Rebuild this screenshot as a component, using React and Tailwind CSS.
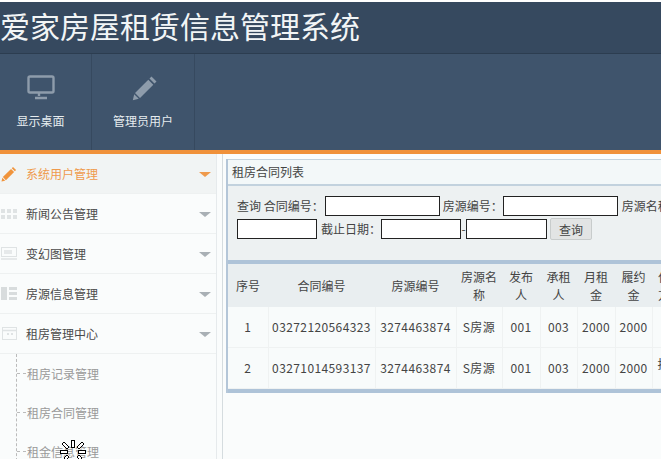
const font = { fontFamily: '"Noto Sans CJK SC", "Noto Sans", sans-serif' };

function Monitor() {
  return (
    <svg width="28" height="26" viewBox="0 0 28 26" fill="none">
      <rect x="1.5" y="1.5" width="25" height="16" rx="1.5" stroke="#8e9cab" strokeWidth="2.4" />
      <path d="M12 18v3M8 23h12" stroke="#8e9cab" strokeWidth="2.4" />
    </svg>
  );
}

function Pencil({ color = "#8e9cab", size = 26 }) {
  return (
    <svg width={size} height={size} viewBox="0 0 26 26" fill={color}>
      <path d="M19.5 1.5l5 5-2 2-5-5zM16.3 4.7l5 5L8 23l-5-5zM2.2 19.2l4.6 4.6L0.8 25.2z" />
    </svg>
  );
}

function Caret({ active }) {
  return <span className={`w-0 h-0 border-x-[6px] border-x-transparent border-t-[5px] mt-0.5 ${active ? "border-t-[#ef9a4c]" : "border-t-[#a9b0b5]"}`} />;
}

function GridIcon() {
  return (
    <svg width="16" height="10" viewBox="0 0 16 10" fill="#dfe3e4">
      <rect x="0" y="0" width="4" height="4" /><rect x="6" y="0" width="4" height="4" /><rect x="12" y="0" width="4" height="4" />
      <rect x="0" y="6" width="4" height="4" /><rect x="6" y="6" width="4" height="4" /><rect x="12" y="6" width="4" height="4" />
    </svg>
  );
}

function SlideIcon() {
  return (
    <svg width="16" height="13" viewBox="0 0 16 13" fill="none" stroke="#dfe3e4">
      <rect x="0.5" y="0.5" width="15" height="9" strokeWidth="1" />
      <rect x="3" y="3" width="8" height="4" fill="#e6e9ea" stroke="none" />
      <path d="M0 12h16" strokeWidth="1.5" />
    </svg>
  );
}

function BlocksIcon() {
  return (
    <svg width="16" height="13" viewBox="0 0 16 13" fill="#d8dcdd">
      <rect x="0" y="0" width="6" height="13" /><rect x="8" y="0" width="8" height="3" />
      <rect x="8" y="5" width="8" height="3" /><rect x="8" y="10" width="8" height="3" />
    </svg>
  );
}

function CalIcon() {
  return (
    <svg width="15" height="13" viewBox="0 0 15 13" fill="none" stroke="#dfe3e4">
      <rect x="0.5" y="0.5" width="14" height="12" />
      <path d="M0 3.5h15" strokeWidth="1.5" />
      <rect x="5" y="6" width="2" height="2" fill="#dfe3e4" stroke="none" />
      <rect x="9" y="6" width="2" height="2" fill="#dfe3e4" stroke="none" />
    </svg>
  );
}

function Busy() {
  return (
    <svg className="absolute left-[58px] top-[439px]" width="30" height="20" viewBox="0 0 30 20" fill="#fff" stroke="#000" strokeWidth="1">
      <rect x="13.5" y="1.5" width="3" height="7" />
      <path d="M4 5l2-2 5 5-2 2zM26 5l-2-2-5 5 2 2z" />
      <rect x="2.5" y="11.5" width="7" height="3" />
      <rect x="20.5" y="11.5" width="7" height="3" />
      <path d="M9 16l2 2-3 3-2-2zM21 16l-2 2 3 3 2-2z" />
    </svg>
  );
}

const menu = [
  { label: "系统用户管理", icon: <Pencil color="#f0943c" size={16} />, active: true },
  { label: "新闻公告管理", icon: <GridIcon /> },
  { label: "变幻图管理", icon: <SlideIcon /> },
  { label: "房源信息管理", icon: <BlocksIcon /> },
  { label: "租房管理中心", icon: <CalIcon /> },
];

const subMenu = ["租房记录管理", "租房合同管理", "租金信息管理"];

const headers = ["序号", "合同编号", "房源编号", "房源名称", "发布人", "承租人", "月租金", "履约金", "付款方式"];
const widths = ["w-[40px]", "w-[107px]", "w-[81px]", "w-[46px]", "w-[38px]", "w-[37px]", "w-[38px]", "w-[37px]", "w-[40px]"];
const rows = [
  ["1", "03272120564323", "3274463874", "S房源", "001", "003", "2000", "2000", ""],
  ["2", "03271014593137", "3274463874", "S房源", "001", "003", "2000", "2000", "按月"],
];

function Field({ w }) {
  return <input className={`${w} h-[20px] bg-white border border-[#222] align-middle`} />;
}

export default function App() {
  return (
    <div className="relative w-[666px] h-[459px] overflow-hidden bg-white text-[12px] text-[#333]" style={font}>
      <div className="w-[661px] h-full flex flex-col bg-[#fafcfc] overflow-hidden">
        <div className="h-[2px] bg-white shrink-0" />
        <header className="h-[52px] shrink-0 bg-[#36495f] border-b border-[#2c3d50] flex items-center pb-1.5 text-[30px] leading-none text-[#f2f5f6] whitespace-nowrap">
          爱家房屋租赁信息管理系统
        </header>
        <nav className="h-[96px] shrink-0 bg-[#3f546c] flex">
          <div className="w-[92px] pr-[10px] border-r border-[#36495f] flex flex-col items-center pt-[20px] gap-[10px] text-[#e6ecef]">
            <div className="h-[28px] flex items-center"><Monitor /></div>
            <span>显示桌面</span>
          </div>
          <div className="w-[103px] border-r border-[#36495f] flex flex-col items-center pt-[20px] gap-[10px] text-[#e6ecef]">
            <div className="h-[28px] flex items-center pl-[3px]"><Pencil /></div>
            <span>管理员用户</span>
          </div>
        </nav>
        <div className="h-[4px] shrink-0 bg-[#f0913a]" />
        <div className="flex-1 flex min-h-0">
          <aside className="w-[223px] shrink-0 border-r border-[#d5dcdf]">
            <div className="w-[217px] h-full border-r border-[#e6eaec]">
              {menu.map((m) => (
                <div key={m.label} className={`h-[40px] flex items-center border-b border-[#eef1f1] ${m.active ? "bg-[#f1f4f4] text-[#ef9a4c]" : "text-[#4a4a4a]"}`}>
                  <span className="w-[26px] shrink-0 flex justify-center pr-2">{m.icon}</span>
                  <span className="flex-1">{m.label}</span>
                  <span className="pr-[5px] flex"><Caret active={m.active} /></span>
                </div>
              ))}
              <div className="ml-[16px] border-l border-dashed border-[#bbb]">
                {subMenu.map((s) => (
                  <div key={s} className="h-[39px] flex items-center text-[#999]">
                    <span className="w-[9px] mr-[1px] border-t border-dashed border-[#bbb]" />
                    {s}
                  </div>
                ))}
              </div>
            </div>
          </aside>
          <main className="flex-1 min-w-0 pl-[3px] pt-[5px] overflow-hidden">
            <div className="border-l-2 border-[#b4c6d8] w-full">
              <div className="h-[27px] flex items-center pl-[4px] bg-[#f3f8f9] border-t border-[#c5d3dc] border-b-2 border-b-[#c2d2de] text-[#444]">租房合同列表</div>
              <div className="h-[74px] bg-[#edf1f2] pl-[9px] pt-[9px] text-[#444] whitespace-nowrap leading-[22px]">
                <div className="flex items-center">
                  <span className="mr-[1px]">查询 合同编号：</span><Field w="w-[115px]" />
                  <span className="ml-[3px]">房源编号：</span><Field w="w-[115px]" />
                  <span className="ml-[4px]">房源名称：</span>
                </div>
                <div className="flex items-center mt-[1px]">
                  <Field w="w-[80px]" />
                  <span className="ml-[4px]">截止日期：</span><Field w="w-[80px]" />
                  <span className="w-[5px] text-center">-</span><Field w="w-[81px]" />
                  <button className="ml-[3px] w-[42px] h-[22px] bg-[#e2e4e4] border border-[#c8cccc] rounded-[2px] text-[#444]">查询</button>
                </div>
              </div>
              <div className="h-[4px] bg-[#aec3d8]" />
              <table className="table-fixed border-collapse w-[464px] text-center text-[#444]">
                <colgroup>
                  {widths.map((w, i) => <col key={i} className={w} />)}
                </colgroup>
                <thead>
                  <tr className="h-[43px] bg-[#e9eef0]">
                    {headers.map((h, i) => (
                      <th key={h} className={`font-normal leading-[18px] ${i === 8 ? "text-left pl-[6px] pr-[10px]" : "px-[5px]"}`}>{h}</th>
                    ))}
                  </tr>
                </thead>
                <tbody>
                  {rows.map((r, n) => (
                    <tr key={r[0]} className={`${n === 0 ? "h-[40px]" : "h-[41px]"} bg-[#f8fbfb]`}>
                      {r.map((c, i) => (
                        <td key={i} className={`border-r border-b border-[#eff2f2] whitespace-nowrap tracking-[0.4px] ${i === 8 ? "text-left pl-[5px] pb-[8px]" : ""}`}>{c}</td>
                      ))}
                    </tr>
                  ))}
                </tbody>
              </table>
              <div className="h-[4px] bg-[#aec3d8]" />
            </div>
          </main>
        </div>
      </div>
      <Busy />
    </div>
  );
}
